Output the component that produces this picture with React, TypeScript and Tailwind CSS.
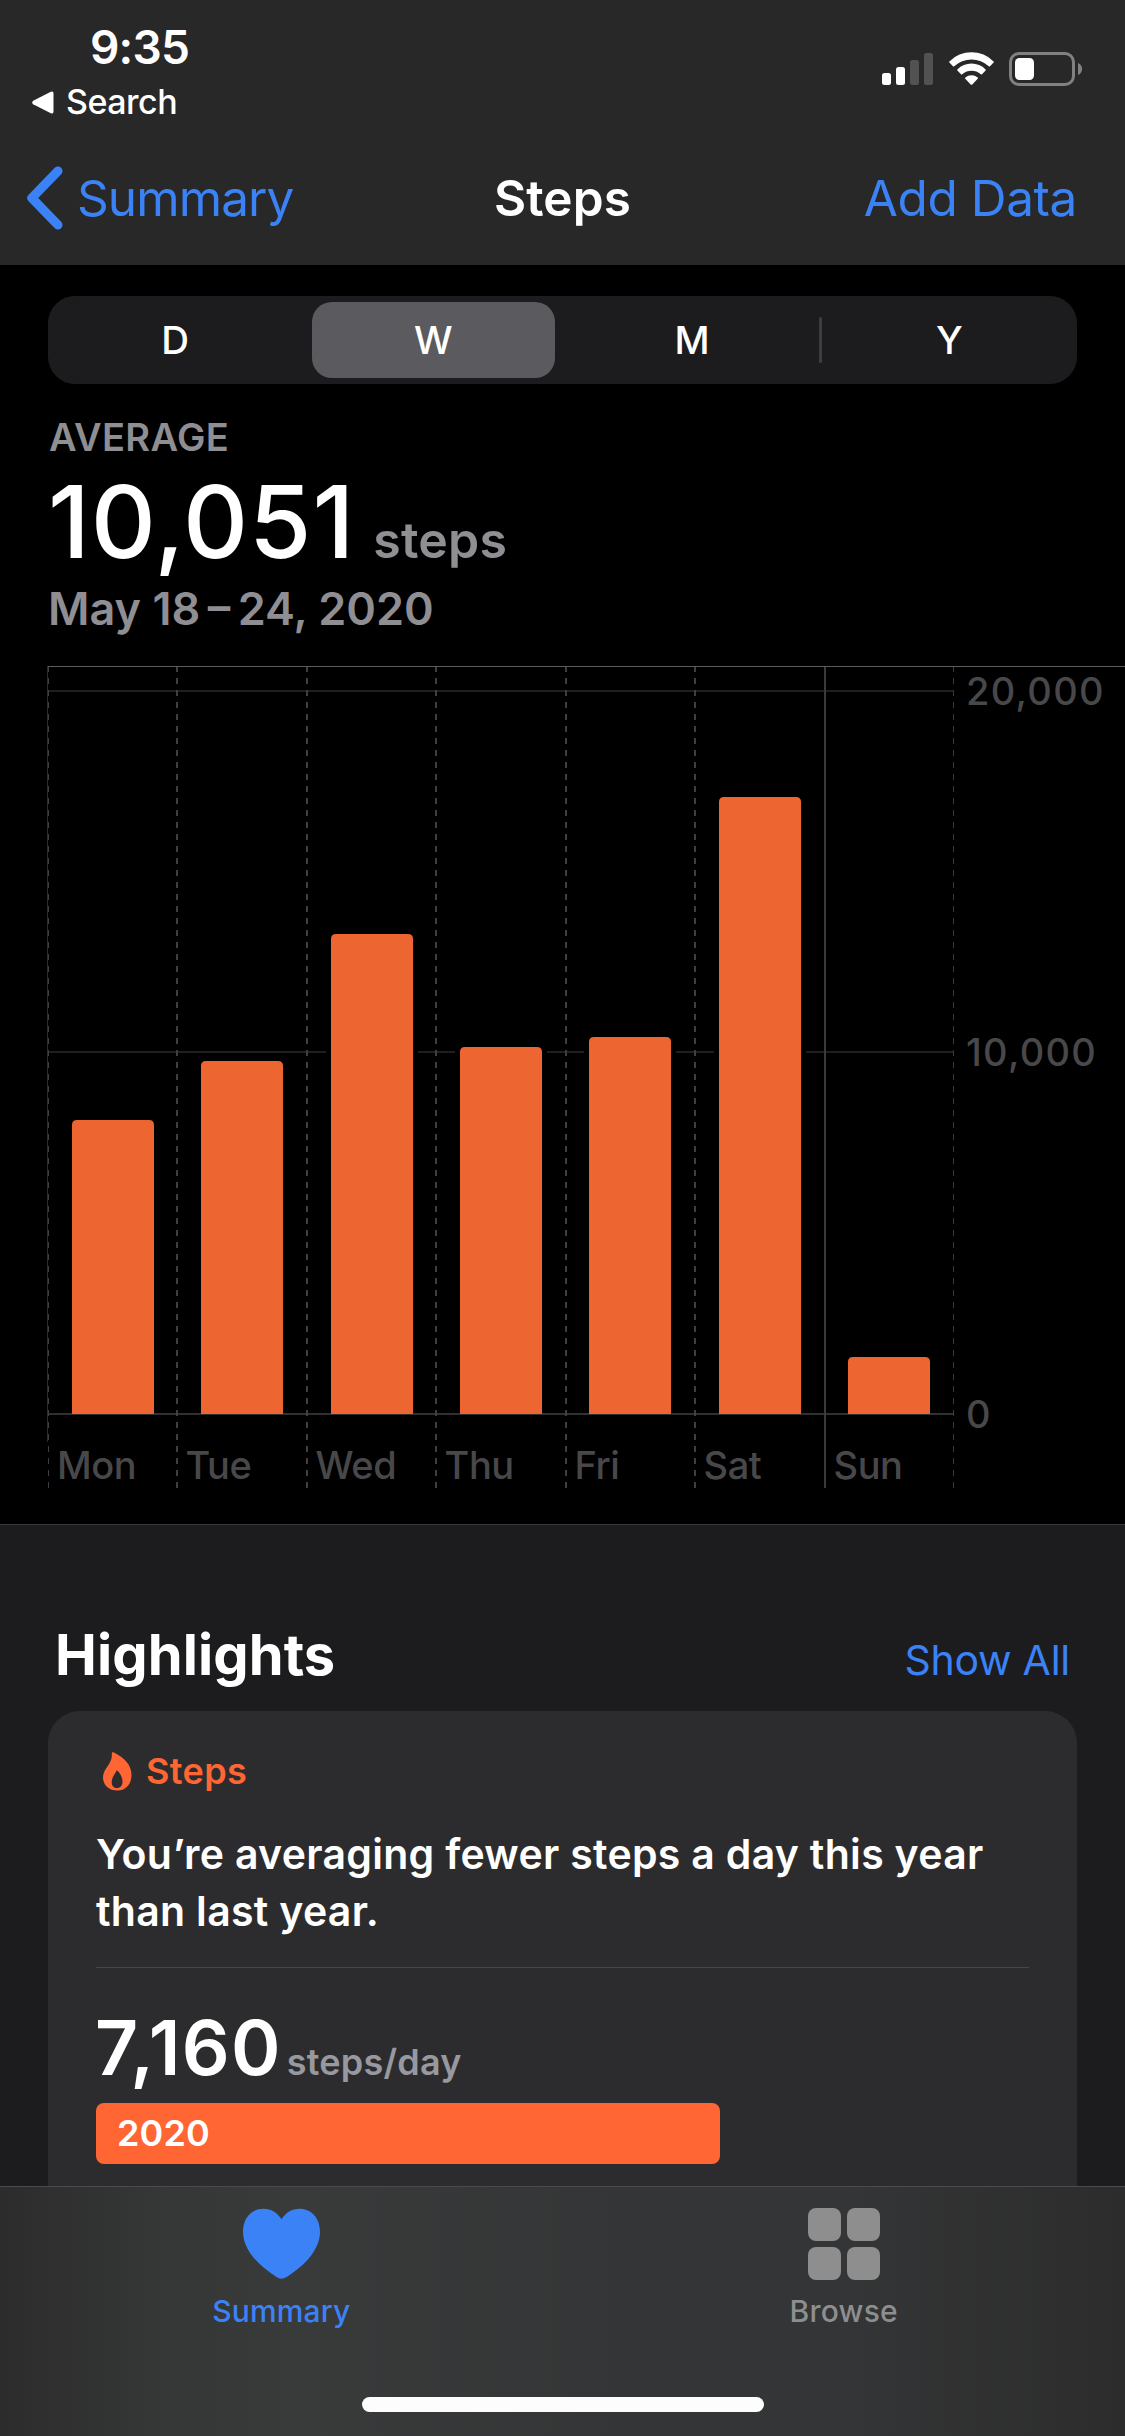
const CHART_TOP = 666;

const days = [
  { label: "Mon", line: 48.5, bar: 72, top: 1120 },
  { label: "Tue", line: 177, bar: 201, top: 1061 },
  { label: "Wed", line: 307, bar: 331, top: 934 },
  { label: "Thu", line: 436, bar: 460, top: 1047 },
  { label: "Fri", line: 566, bar: 589, top: 1037 },
  { label: "Sat", line: 695, bar: 719, top: 797 },
  { label: "Sun", line: 825, bar: 848, top: 1357 },
];

const gridLines = [
  { label: "20,000", y: 691, color: "#1f1f21" },
  { label: "10,000", y: 1052, color: "#1f1f21" },
  { label: "0", y: 1414, color: "#303032" },
];

function StatusIcons() {
  return (
    <div className="flex items-start pt-[52px] pr-[42px]">
      <svg width="51" height="33" viewBox="0 0 51 33" fill="#fff">
        <rect x="0" y="21" width="9" height="12" rx="2.5" />
        <rect x="14" y="15" width="9" height="18" rx="2.5" />
        <rect x="28" y="8" width="9" height="25" rx="2.5" fill="#525252" />
        <rect x="42" y="1" width="9" height="32" rx="2.5" fill="#525252" />
      </svg>
      <svg className="ml-[15.5px]" width="45" height="33" viewBox="0 0 45 33" fill="#fff">
        <path d="M.4 9.4A31 31 0 0 1 44.6 9.4Q45.2 10 44.6 10.6L41 14.2Q40.4 14.8 39.8 14.2A25.5 25.5 0 0 0 5.2 14.2Q4.6 14.8 4 14.2L.4 10.6Q-.2 10 .4 9.4Z" />
        <path d="M8.4 17.4A20 20 0 0 1 36.6 17.4Q37.2 18 36.6 18.6L33 22.2Q32.4 22.8 31.8 22.2A14.5 14.5 0 0 0 13.2 22.2Q12.6 22.8 12 22.2L8.4 18.6Q7.8 18 8.4 17.4Z" />
        <path d="M16.3 25.5A9.5 9.5 0 0 1 28.7 25.5Q29.3 26.1 28.7 26.8L23.3 32.4Q22.5 33.2 21.7 32.4L16.3 26.8Q15.7 26.1 16.3 25.5Z" />
      </svg>
      <svg className="ml-[15.5px]" width="74" height="34" viewBox="0 0 74 34">
        <rect x="1.5" y="1.5" width="63" height="31" rx="8.5" fill="none" stroke="#818181" strokeWidth="3" />
        <rect x="6" y="6" width="19" height="22" rx="4.5" fill="#fff" />
        <path d="M69 11C74.5 13 74.5 21 69 23Z" fill="#818181" />
      </svg>
    </div>
  );
}

function Header() {
  return (
    <header className="h-[265px] bg-[#282828]">
      <div className="flex h-[132px] items-start justify-between">
        <div className="flex flex-col pt-[27px]">
          <span className="pl-[90px] text-[46px] leading-[40px] font-semibold tracking-[-0.8px]">9:35</span>
          <div className="mt-[17px] flex items-center pl-8">
            <svg width="22" height="23" viewBox="0 0 22 23" fill="#fff">
              <path d="M1.2 9.7L18.8.8Q21.5-.3 21.5 2.4V20.6Q21.5 23.3 18.8 22.2L1.2 13.3Q-.8 11.5 1.2 9.7Z" />
            </svg>
            <span className="ml-3 text-[34px] leading-[36px] font-[450] tracking-[-0.5px]">Search</span>
          </div>
        </div>
        <StatusIcons />
      </div>
      <nav className="grid h-[132px] grid-cols-[1fr_auto_1fr] items-center text-[49.5px] leading-[60px]">
        <a className="flex items-center pl-[27px] text-[#3b82f7]">
          <svg width="36" height="64" viewBox="0 0 36 64" fill="none" stroke="currentColor" strokeWidth="9" strokeLinecap="round" strokeLinejoin="round">
            <path d="M31 5L4.8 32L31 59" />
          </svg>
          <span className="ml-[14px] tracking-[-0.9px]">Summary</span>
        </a>
        <h1 className="font-semibold tracking-[0.1px]">Steps</h1>
        <a className="pr-[48px] text-right tracking-[-0.4px] text-[#3b82f7]">Add Data</a>
      </nav>
    </header>
  );
}

function RangePicker() {
  return (
    <div className="mx-12 mt-[31px] grid h-[88px] grid-cols-4 rounded-[27px] bg-[#1c1c1e] text-[38.5px] font-medium">
      <div className="flex items-center justify-center pt-px pr-[3px]">D</div>
      <div className="my-[6px] mr-[8px] ml-[7px] flex items-center justify-center rounded-[20px] bg-[#5b5a5f] pt-px">W</div>
      <div className="flex items-center justify-center pt-px pl-[2px]">M</div>
      <div className="flex items-center">
        <span className="-ml-px h-[46px] w-[3px] rounded-full bg-[#3e3e41]" />
        <span className="flex-1 pt-px text-center">Y</span>
      </div>
    </div>
  );
}

function Chart() {
  return (
    <svg
      className="mt-[34px] block"
      width="1125"
      height="858"
      viewBox={`0 ${CHART_TOP} 1125 858`}
      fontFamily="Inter, sans-serif"
      fontSize="38"
      fontWeight="500"
    >
      {gridLines.map((g) => (
        <g key={g.label}>
          <rect x="48" y={g.y - 1} width="905" height="2" fill={g.color} />
          <text x="966" y={g.y + 14} fill="#48484a" letterSpacing="1.3">
            {g.label}
          </text>
        </g>
      ))}

      {days.map((d) => (
        <g key={d.label}>
          {/* dark halo keeps the grid lines off the bar */}
          <rect x={d.bar - 5} y={d.top - 5} width="92" height={1413 - d.top + 5} fill="#000" />
          <path
            d={`M${d.bar} 1414V${d.top + 5}q0-5 5-5h72q5 0 5 5V1414Z`}
            fill="#ed6530"
          />
          {d.label === "Sun" ? (
            <rect x={d.line - 1} y="667" width="2" height="821" fill="#3a3a3c" />
          ) : (
            <path
              d={`M${d.line} 666V1488`}
              stroke="#3f3f41"
              strokeWidth={d.label === "Mon" ? 1 : 2}
              strokeDasharray="6 6"
            />
          )}
          <text x={d.line + 8.5} y="1479" fill="#48484a" letterSpacing="-0.4">
            {d.label}
          </text>
        </g>
      ))}

      <path d="M953.5 666V1488" stroke="#3a3a3c" strokeDasharray="6 6" />
      <rect x="47" y="666" width="1" height="776" fill="#2c2c2e" />
      <rect x="48" y="666" width="1077" height="1" fill="#5c5c5e" />
    </svg>
  );
}

function HighlightCard() {
  return (
    <article className="mx-12 h-[475px] rounded-t-[32px] bg-[#2c2c2e] px-12 pt-[41px]">
      <div className="flex h-[39px] items-center pl-[7px] text-[#ff6634]">
        <svg width="29" height="39" viewBox="0 0 29 39" fill="currentColor" fillRule="evenodd">
          <path d="M8.8 1.7C8.7.4 9.8-.2 11 .5C22 6 28.5 13.5 28.5 22.8C28.5 32 23 38.6 14.5 38.6C6 38.6 0 33 0 25.5C0 16 9.8 12 8.8 1.7ZM13.7 18.3C12.5 22 8.7 25 8.7 30C8.7 34 11 36 14 36C17.5 36 19.5 33.5 19.5 29.5C19.5 25 16.5 20 13.7 18.3Z" />
        </svg>
        <span className="ml-[14px] pb-px text-[36px] leading-none font-semibold tracking-[0.4px]">Steps</span>
      </div>
      <p className="mt-[35px] text-[41px] leading-[57px] font-semibold tracking-[0.3px] whitespace-nowrap">
        You’re averaging fewer steps a day this year
        <br />
        than last year.
      </p>
      <div className="mt-[27px] h-px bg-[#464648]" />
      <div className="mt-[43px] flex h-[74px] items-baseline font-semibold">
        <span className="-ml-px text-[75px] leading-[74px] tracking-[1.3px]">7,160</span>
        <span className="ml-[5px] text-[36px] leading-none tracking-[0.2px] text-[#98989f]">steps/day</span>
      </div>
      <div className="mt-[18px] flex h-[61px] w-[624px] items-center rounded-lg bg-[#ff6634] pb-px pl-[21px] text-[36px] leading-none font-semibold tracking-[0.1px]">
        2020
      </div>
    </article>
  );
}

function TabBar() {
  return (
    <footer className="h-[250px] border-t border-[#4b4b4d] bg-[linear-gradient(90deg,#2c2c2c_0%,#353636_14%,#393a3a_26%,#343536_55%,#343536_75%,#2c2c2c_100%)]">
      <div className="grid grid-cols-2 pt-[21px] text-[30px] leading-[31px] font-medium tracking-[0.15px]">
        <div className="flex flex-col items-center text-[#3b82f7]">
          <svg width="77" height="72" viewBox="0 -0.7 77 72" fill="currentColor">
            <path d="M38.5 10.6C34.5 4 28 0 20.5 0C8.5 0 0 9.5 0 23C0 40 14 56 33 68C35 69.3 37 70 38.5 70C40 70 42 69.3 44 68C63 56 77 40 77 23C77 9.5 68.5 0 56.5 0C49 0 42.5 4 38.5 10.6Z" />
          </svg>
          <span className="mt-4">Summary</span>
        </div>
        <div className="flex flex-col items-center text-[#8e8e8e]">
          <div className="grid grid-cols-2 gap-[6px]">
            <span className="size-[33px] rounded-lg bg-current" />
            <span className="size-[33px] rounded-lg bg-current" />
            <span className="size-[33px] rounded-lg bg-current" />
            <span className="size-[33px] rounded-lg bg-current" />
          </div>
          <span className="mt-4 tracking-[0.25px]">Browse</span>
        </div>
      </div>
      <div className="mx-auto mt-[70px] h-[15px] w-[402px] rounded-full bg-[#fdfdfd]" />
    </footer>
  );
}

export default function App() {
  return (
    <div className="h-[2436px] w-[1125px] overflow-hidden bg-black font-['Inter',sans-serif] text-white">
      <Header />
      <RangePicker />

      <section className="mt-[33px] font-semibold text-[#8e8e93]">
        <p className="pl-[49px] text-[38px] leading-[40px] tracking-[0.3px]">AVERAGE</p>
        <div className="mt-[15px] flex h-[100px] items-baseline pl-[48px]">
          <span className="text-[101px] leading-[98px] font-medium tracking-[0.9px] text-white">10,051</span>
          <span className="ml-[18px] text-[50px] leading-none tracking-[0.2px]">steps</span>
        </div>
        <p className="mt-[14px] pl-12 text-[45px] leading-[46px] tracking-normal">
          May 18{"\u2009"}–{"\u2009"}24, 2020
        </p>
      </section>

      <Chart />

      <section className="border-t border-[#38383a] bg-[#1c1c1e] pt-[102px]">
        <div className="mb-[27px] flex h-[57px] items-baseline justify-between px-[55px]">
          <h2 className="text-[56px] leading-[57px] font-bold tracking-[0.1px]">Highlights</h2>
          <a className="text-[41px] leading-none tracking-[-0.25px] text-[#3b82f7]">Show All</a>
        </div>
        <HighlightCard />
      </section>

      <TabBar />
    </div>
  );
}
